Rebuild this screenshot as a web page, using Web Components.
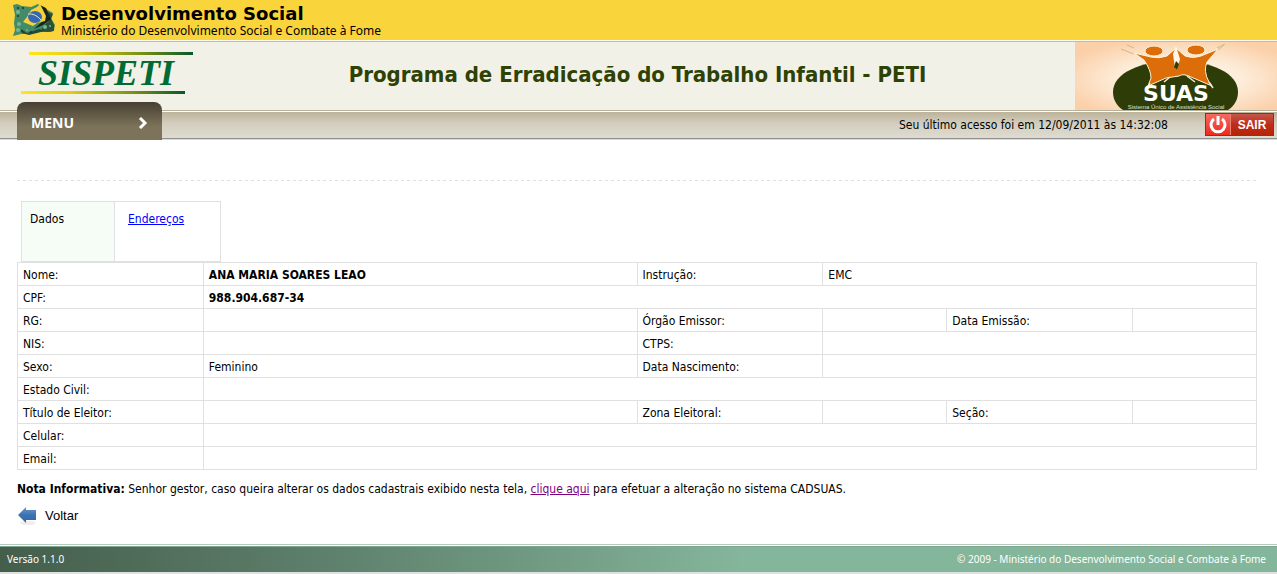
<!DOCTYPE html>
<html lang="pt-BR">
<head>
<meta charset="utf-8">
<title>SISPETI</title>
<style>
body { margin: 0; background: #fff; color: #000; font: 12px/14px "DejaVu Sans Condensed", "Noto Sans", sans-serif; }
</style>
</head>
<body>
<peti-page></peti-page>

<template id="t-brand">
<style>
:host { display: flex; align-items: flex-start; gap: 5px; height: 40px; padding-left: 13px; background: #fad43b; border-bottom: 1px solid #fbfaf0; }
svg { margin-top: 4px; flex: none; }
strong { display: block; margin-top: 4px; font: bold 18px/20px "DejaVu Sans", sans-serif; }
span { display: block; font: 12px/14px "Noto Sans", sans-serif; white-space: nowrap; }
</style>
<svg width="43" height="32" viewBox="0 0 43 32" aria-hidden="true">
<path d="M0 1 4 0 9 2 18 3 25 0 31 4 40 9 38 14 42 21 41 26 38 28 30 28 22 27 15 30 8 30 0 32 2 26 1 19 2 11Z" fill="#438a68"/>
<path d="M28 7 35 8 40 10 38 15 41 21 41 27 34 28 28 26 31 21 36 17Z" fill="#2b5239"/>
<path d="M8 25 14 29 26 25 34 27 28 28 16 31 9 29Z" fill="#24483a"/>
<path d="M27 1 33 4 38 15 30 21 21 25 32 15 31 8Z" fill="#19241b"/>
<path d="M10 18 14 13 18 6 24 3 27 0 33 12 32 17 24 19 20 22Z" fill="#f5d13a"/>
<ellipse cx="22" cy="13" rx="7" ry="6" fill="#3768ae"/>
<path d="M15 10q7-1 13 6" fill="none" stroke="#dfe5d9" stroke-width="1"/>
<g fill="#19382a"><circle cx="5" cy="4" r="1"/><circle cx="10" cy="4" r="1"/><circle cx="5" cy="12" r="1"/><circle cx="9" cy="27" r="1"/><circle cx="18" cy="28" r="1"/><circle cx="36" cy="12" r="1"/></g>
<g fill="#78b592"><circle cx="5" cy="8" r="2"/><circle cx="6" cy="20" r="2"/><circle cx="5" cy="26" r="2"/><circle cx="14" cy="26" r="1"/><circle cx="32" cy="23" r="2"/><circle cx="37" cy="22" r="1"/></g>
</svg>
<div><strong>Desenvolvimento Social</strong><span>Ministério do Desenvolvimento Social e Combate à Fome</span></div>
</template>

<template id="t-head">
<style>
:host { display: grid; grid-template-columns: 200px 1fr 202px; align-items: center; height: 68px; background: #f2f1e8; border-top: 1px solid #c0bca9; border-bottom: 1px solid #b7b19b; }
h1 { margin: 0; padding-bottom: 3px; font-size: 22px; line-height: 28px; text-align: center; color: #2d4203; }
svg { display: block; }
</style>
<svg width="200" height="68" viewBox="0 0 200 68" role="img" aria-label="SISPETI">
<defs><linearGradient id="gl"><stop offset="0" stop-color="#ffe51c"/><stop offset=".3" stop-color="#ddcf14"/><stop offset=".7" stop-color="#748e17"/><stop offset="1" stop-color="#07582c"/></linearGradient></defs>
<rect x="29" y="10" width="164" height="3" fill="url(#gl)"/><rect x="21" y="49" width="164" height="3" fill="url(#gl)"/>
<text x="38" y="43" font-family="Liberation Serif, serif" font-size="36" font-weight="bold" font-style="italic" fill="#006b33">SISPETI</text>
</svg>
<h1>Programa de Erradicação do Trabalho Infantil - PETI</h1>
<svg width="202" height="68" viewBox="0 0 202 68" role="img" aria-label="SUAS">
<defs><radialGradient id="gp" cx=".52" cy=".55" r=".62"><stop offset="0" stop-color="#fffdf7"/><stop offset=".5" stop-color="#fdecd8"/><stop offset="1" stop-color="#fbcfa8"/></radialGradient></defs>
<rect width="202" height="68" fill="url(#gp)"/>
<path d="M38 50C38 31 65 19 101 19S163 31 163 50C163 58 159 64 153 68H48C42 64 38 58 38 50Z" fill="#2e3d08"/>
<path d="M59 11 76 15Q84 17 92 14L101 6 110 14Q118 17 126 14L143 7 132 20Q128 29 134 40L137 44 116 35Q108 31 104 34L91 36 73 44 76 36Q76 28 69 18Z" fill="#dc6d08" stroke="#fff3d8" stroke-width="1"/>
<path d="M101 4 98 12 100 26 102 28 105 17Z" fill="#fff7e5"/><path d="M101 19 99 25 102 28 104 22Z" fill="#2e3d08"/>
<path d="M75 41 72 47M95 35 89 40M112 34 120 40M134 40 138 46" stroke="#f5ead0" stroke-width="1.5"/>
<path d="M46 7 59 12M143 8 149 3M52 3l7 3M142 6l8-4" stroke="#cdbd83" stroke-width="1"/>
<ellipse cx="79" cy="9" rx="9" ry="5" fill="#dc6d08" stroke="#fff3d8"/><ellipse cx="121" cy="8" rx="9" ry="5" fill="#dc6d08" stroke="#fff3d8"/>
<text x="101" y="59" text-anchor="middle" font-family="DejaVu Sans, sans-serif" font-size="22" font-weight="bold" fill="#fff">SUAS</text>
<text x="101" y="67" text-anchor="middle" font-family="Liberation Sans, sans-serif" font-size="6" fill="#dfe0ca">Sistema Único de Assistência Social</text>
</svg>
</template>

<template id="t-bar">
<style>
:host { display: flex; align-items: flex-end; height: 26px; padding: 0 3px 0 17px; background: linear-gradient(#bdb39b, #d3cebf 45%, #dedbd0); border-top: 1px solid #fff; border-bottom: 1px solid #8f8f8f; box-shadow: 0 1px #dcdcdc; }
button { border: 0; cursor: pointer; }
.menu { display: flex; flex: none; align-items: center; justify-content: space-between; width: 145px; height: 38px; margin-bottom: -2px; padding: 4px 14px 0; border-radius: 8px 8px 0 0; background: linear-gradient(#474033, #7d735a 65%, #7d735a); color: #fff; font: bold 14px/18px "Noto Sans", sans-serif; }
p { flex: 1; margin: 0 37px 0 0; line-height: 26px; text-align: right; }
.exit { display: flex; align-items: center; flex: none; width: 69px; height: 23px; margin-bottom: 2px; padding: 0; border: 1px solid #9c2b1c; background: linear-gradient(#c4574a, #bf2c1a 50%, #b62408); color: #fff; font: bold 12px/16px "Liberation Sans", sans-serif; }
.exit svg { flex: none; background: linear-gradient(#f56b60, #ee2a20); border-right: 1px solid #e68373; }
.exit span { flex: 1; text-align: center; }
</style>
<button class="menu" type="button">MENU<svg width="10" height="12" viewBox="0 0 10 12" aria-hidden="true"><path d="M2 1 7 6 2 11" fill="none" stroke="#fff" stroke-width="3"/></svg></button>
<p>Seu último acesso foi em 12/09/2011 às 14:32:08</p>
<button class="exit" type="button"><svg width="24" height="21" viewBox="0 0 24 21" aria-hidden="true"><path d="M8 5A7 7 0 1 0 16 5" fill="none" stroke="#fff" stroke-width="3"/><path d="M12 2V11" stroke="#fff" stroke-width="3"/></svg><span>SAIR</span></button>
</template>

<template id="t-tabs">
<style>
:host { display: flex; margin-left: 4px; }
div { box-sizing: border-box; height: 61px; border: 1px solid #e0e0e0; padding: 10px 8px; }
.on { width: 93px; background: #f6fdf6; border-right: 0; }
.off { width: 107px; padding-left: 13px; }
a { color: #00f; }
</style>
<div class="on">Dados</div><div class="off"><a href="#enderecos">Endereços</a></div>
</template>

<template id="t-data">
<style>
:host { display: block; }
table { width: 100%; border-collapse: collapse; table-layout: fixed; }
th, td { box-sizing: border-box; height: 23px; padding: 2px 5px 0; border: 1px solid #e0e0e0; text-align: left; font-weight: normal; white-space: nowrap; }
.l { width: 15%; } .w { width: 35%; } .n { width: 10%; }
b { font-weight: bold; }
</style>
<table>
<colgroup><col class="l"><col class="w"><col class="l"><col class="n"><col class="l"><col class="n"></colgroup>
<tbody>
<tr><th scope="row">Nome:</th><td><b>ANA MARIA SOARES LEAO</b></td><th scope="row">Instrução:</th><td colspan="3">EMC</td></tr>
<tr><th scope="row">CPF:</th><td colspan="5"><b>988.904.687-34</b></td></tr>
<tr><th scope="row">RG:</th><td></td><th scope="row">Órgão Emissor:</th><td></td><th scope="row">Data Emissão:</th><td></td></tr>
<tr><th scope="row">NIS:</th><td></td><th scope="row">CTPS:</th><td colspan="3"></td></tr>
<tr><th scope="row">Sexo:</th><td>Feminino</td><th scope="row">Data Nascimento:</th><td colspan="3"></td></tr>
<tr><th scope="row">Estado Civil:</th><td colspan="5"></td></tr>
<tr><th scope="row">Título de Eleitor:</th><td></td><th scope="row">Zona Eleitoral:</th><td></td><th scope="row">Seção:</th><td></td></tr>
<tr><th scope="row">Celular:</th><td colspan="5"></td></tr>
<tr><th scope="row">Email:</th><td colspan="5"></td></tr>
</tbody>
</table>
</template>

<template id="t-back">
<style>
:host { display: flex; }
a { display: flex; align-items: center; gap: 8px; color: #000; text-decoration: none; font: 13px/20px "Liberation Sans", sans-serif; }
</style>
<a href="#voltar"><svg width="20" height="20" viewBox="0 0 20 20" aria-hidden="true"><defs><linearGradient id="ga" x2="0" y2="1"><stop offset="0" stop-color="#6d98cb"/><stop offset=".5" stop-color="#3c72b3"/><stop offset="1" stop-color="#3466a6"/></linearGradient></defs><ellipse cx="11" cy="17" rx="8" ry="2" fill="#eee"/><path d="M1 9 9 1V4H19V14H9V17Z" fill="url(#ga)"/></svg><slot></slot></a>
</template>

<template id="t-foot">
<style>
:host { display: block; border-top: 1px solid #b5cabd; border-bottom: 2px solid #e0e0e0; padding-top: 1px; }
div { display: flex; justify-content: space-between; padding: 0 11px 0 7px; background: linear-gradient(90deg, #455e4c, #5d7f6b 25%, #78a48b 48%, #84b69b 58%); border-top: 1px solid #7fa68f; color: #fff; font: 10px/25px "Noto Sans", sans-serif; }
</style>
<div><span>Versão 1.1.0</span><span>© 2009 - Ministério do Desenvolvimento Social e Combate à Fome</span></div>
</template>

<template id="t-page">
<style>
:host { display: block; }
main { padding: 41px 20px 0 17px; }
hr { height: 1px; margin: 0 0 20px; border: 0; background: repeating-linear-gradient(90deg, #e0e0e0 0 3px, transparent 3px 6px); }
p { margin: 12px 0 9px; line-height: 15px; }
p a { color: #800080; }
peti-footer { margin-top: 18px; }
</style>
<peti-brand></peti-brand>
<peti-header></peti-header>
<peti-bar></peti-bar>
<main>
<hr>
<peti-tabs></peti-tabs>
<peti-data></peti-data>
<p><b>Nota Informativa:</b> Senhor gestor, caso queira alterar os dados cadastrais exibido nesta tela, <a href="#cadsuas">clique aqui</a> para efetuar a alteração no sistema CADSUAS.</p>
<peti-back>Voltar</peti-back>
</main>
<peti-footer></peti-footer>
</template>

<script>
const define = (name, id) => customElements.define(name, class extends HTMLElement {
  constructor() {
    super();
    this.attachShadow({ mode: "open" }).append(document.getElementById(id).content.cloneNode(true));
  }
});
define("peti-brand", "t-brand");
define("peti-header", "t-head");
define("peti-bar", "t-bar");
define("peti-tabs", "t-tabs");
define("peti-data", "t-data");
define("peti-back", "t-back");
define("peti-footer", "t-foot");
define("peti-page", "t-page");
</script>
</body>
</html>
